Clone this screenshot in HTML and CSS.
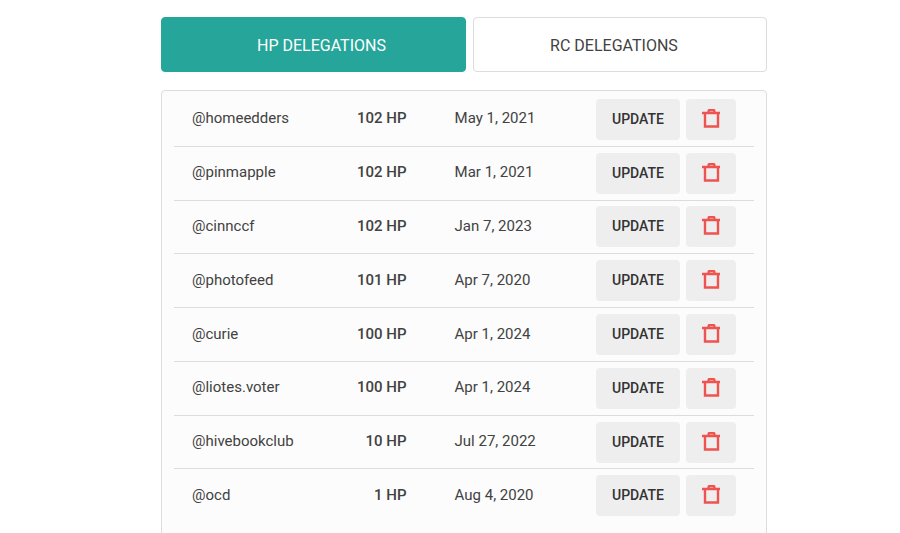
FILE: index.html
```
<!DOCTYPE html>
<html lang="en">
<head>
    <meta charset="UTF-8">
    <meta name="viewport" content="width=device-width, initial-scale=1.0">
    <title>Delegations</title>
    <link rel="stylesheet" href="styles.css">
</head>
<body>
    <svg class="sprite" aria-hidden="true">
        <symbol id="trash" viewBox="0 0 20 20">
            <path d="M1 4H19M4 4V17.5H17V4M7.6 4V2.2Q7.6 1 8.8 1H12.2Q13.4 1 13.4 2.2V4" fill="none" stroke="currentColor" stroke-width="2.4"/>
        </symbol>
    </svg>

    <div class="container">
        <div class="tabs">
            <button class="tab active">HP DELEGATIONS</button>
            <button class="tab">RC DELEGATIONS</button>
        </div>

        <div class="panel">
            <table id="delegations">
                <tbody>
                </tbody>
            </table>
        </div>
    </div>

    <script>
        const delegations = [
            ['homeedders', 102, 'May 1, 2021'],
            ['pinmapple', 102, 'Mar 1, 2021'],
            ['cinnccf', 102, 'Jan 7, 2023'],
            ['photofeed', 101, 'Apr 7, 2020'],
            ['curie', 100, 'Apr 1, 2024'],
            ['liotes.voter', 100, 'Apr 1, 2024'],
            ['hivebookclub', 10, 'Jul 27, 2022'],
            ['ocd', 1, 'Aug 4, 2020']
        ];

        const tableBody = document.querySelector('#delegations tbody');

        for (const [user, amount, date] of delegations) {
            const row = tableBody.insertRow();
            row.innerHTML = `
                <td class="user">@${user}</td>
                <td class="amount">${amount} HP</td>
                <td class="date">${date}</td>
                <td class="actions">
                    <div class="buttons">
                        <button class="btn update">UPDATE</button>
                        <button class="btn delete" aria-label="Delete delegation to ${user}">
                            <svg class="icon"><use href="#trash"/></svg>
                        </button>
                    </div>
                </td>`;
        }
    </script>
</body>
</html>
```
FILE: styles.css
```
body {
    margin: 0;
    font-family: Roboto, sans-serif;
    font-size: 15px;
    color: #424242;
    background-color: #fff;
}
.sprite {
    display: none;
}
.container {
    margin: 17px 133px 0 161px;
}
.tabs {
    display: grid;
    grid-template-columns: 56fr 54fr;
    gap: 7px;
    margin-bottom: 18px;
}
button {
    font-family: inherit;
    cursor: pointer;
}
.tab {
    height: 55px;
    padding: 2px 12px 0 0;
    border: 1px solid #dcdcdc;
    border-radius: 4px;
    background-color: #fff;
    color: #424242;
    font-size: 16px;
}
.tab.active {
    padding: 2px 0 0 16px;
    border-color: #26a69a;
    background-color: #26a69a;
    color: #fff;
}
.panel {
    padding: 2px 12px 20px;
    border: 1px solid #dcdcdc;
    border-radius: 4px;
    background-color: #fcfcfc;
}
table {
    width: 100%;
    height: 429px;
    border-collapse: separate;
    border-spacing: 0;
    table-layout: fixed;
}
td {
    padding: 0 0 2px;
    border-bottom: 1px solid #dcdcdc;
}
tr:last-child td {
    border-bottom: none;
}
td.user {
    width: 24%;
    padding-left: 18px;
}
td.amount {
    width: 13%;
    padding-right: 4px;
    text-align: right;
    font-weight: 500;
}
td.date {
    padding-left: 44px;
}
td.actions {
    width: 158px;
    padding: 0;
}
.buttons {
    display: flex;
    gap: 6px;
}
.btn {
    display: flex;
    align-items: center;
    justify-content: center;
    height: 41px;
    padding: 0 0 1px;
    border: none;
    border-radius: 4px;
    background-color: #eee;
}
.update {
    width: 84px;
    color: #333;
    font-size: 14px;
    font-weight: 500;
}
.delete {
    width: 50px;
    color: #ef5350;
}
.icon {
    width: 20px;
    height: 20px;
    overflow: visible;
}
```
